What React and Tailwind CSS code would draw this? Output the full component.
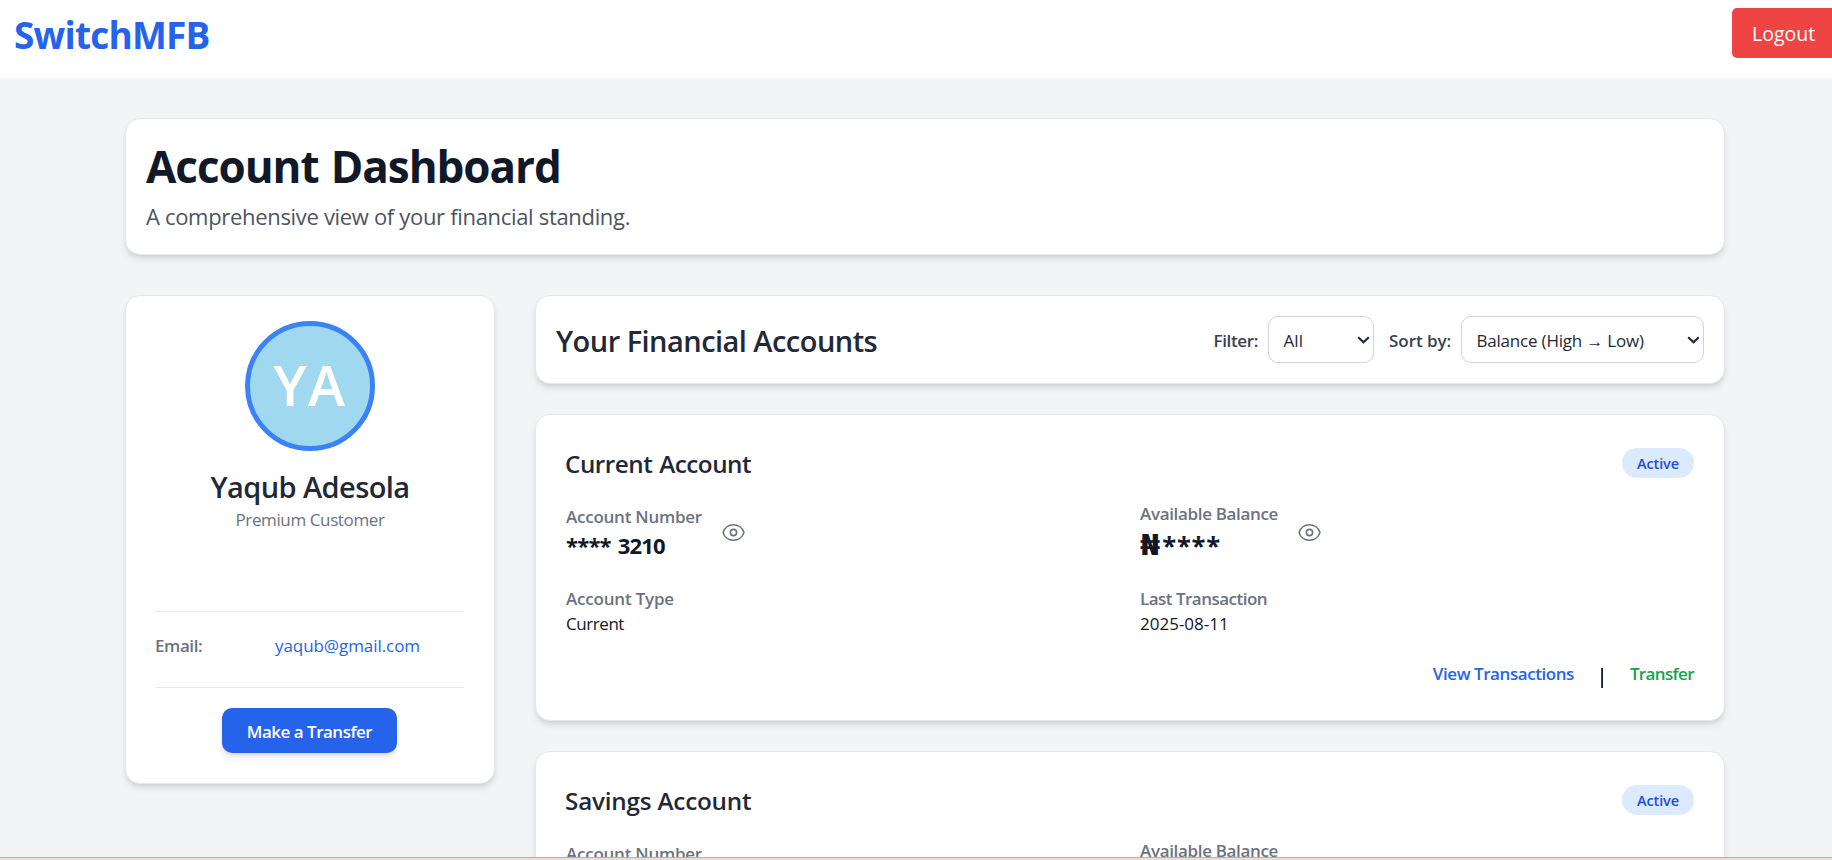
import React from "react";

const card =
  "rounded-[15px] border border-[#e5e7eb] bg-white shadow-[0_5px_7.5px_-1.25px_rgba(0,0,0,0.1),0_2.5px_5px_-2.5px_rgba(0,0,0,0.1)]";

const accounts = [
  {
    title: "Current Account",
    titleClass: "tracking-[-0.48px] [word-spacing:1px]",
    number: "**** 3210",
    type: "Current",
    last: "2025-08-11",
  },
  {
    title: "Savings Account",
    titleClass: "tracking-[-0.2px]",
    number: "**** 6543",
    type: "Savings",
    last: "2025-08-10",
  },
];

function Eye() {
  return (
    <button type="button" className="text-[#6b7280]">
      <svg
        className="block h-[25px] w-[25px]"
        viewBox="0 0 24 24"
        fill="none"
        stroke="currentColor"
        strokeWidth="1.5"
        strokeLinecap="round"
        strokeLinejoin="round"
      >
        <path d="M2.036 12.322a1.012 1.012 0 0 1 0-.639C3.423 7.51 7.36 4.5 12 4.5c4.638 0 8.573 3.007 9.963 7.178.07.207.07.431 0 .639C20.577 16.49 16.64 19.5 12 19.5c-4.638 0-8.573-3.007-9.963-7.178Z" />
        <path d="M15 12a3 3 0 1 1-6 0 3 3 0 0 1 6 0Z" />
      </svg>
    </button>
  );
}

function SelectBox({ label, className }) {
  return (
    <div
      className={`flex h-[47px] items-center justify-between rounded-[10px] border border-[#d1d5db] bg-white pt-[3px] pr-[3px] pl-[14.5px] text-[17px] text-[#1f2937] ${className}`}
    >
      <span className="whitespace-nowrap">{label}</span>
      <svg className="mb-0.5 h-2 w-[13px]" viewBox="0 0 13 8" fill="none" stroke="currentColor" strokeWidth="2.2">
        <path d="M1.2 1.2 6.5 6.2l5.3-5" />
      </svg>
    </div>
  );
}

function AccountCard({ account }) {
  return (
    <section className={`flex h-[307px] shrink-0 flex-col px-[30px] pt-[30px] ${card}`}>
      <div className="flex h-9 items-center justify-between">
        <h3 className={`-ml-px pt-0.5 text-[24.25px] font-semibold text-[#1f2937] ${account.titleClass}`}>
          {account.title}
        </h3>
        <span className="flex h-[30px] w-[72px] items-center justify-center rounded-full bg-[#dbeafe] pt-px text-[14.5px] font-semibold tracking-[-0.1px] text-[#1d4ed8]">
          Active
        </span>
      </div>
      <div className="mt-5 grid grid-cols-2 gap-x-5 gap-y-[22px] text-[17px] leading-[25px]">
        <div className="flex h-[63px] items-center gap-[19px]">
          <div>
            <p className="font-semibold tracking-[-0.24px] text-[#6b7280]">Account Number</p>
            <p className="text-[22px] leading-8 font-bold tracking-[-0.8px] text-[#111827] [word-spacing:2px]">
              {account.number}
            </p>
          </div>
          <Eye />
        </div>
        <div className="flex h-[63px] items-center gap-[19px]">
          <div>
            <p className="font-semibold tracking-[-0.34px] text-[#6b7280]">Available Balance</p>
            <p className="flex h-[38px] items-baseline leading-[38px] font-bold text-[#111827]">
              <span className="mr-0.5 font-['DejaVu_Sans',sans-serif] text-[29px]">₦</span>
              <span className="text-[25.5px] tracking-[0.8px]">****</span>
            </p>
          </div>
          <Eye />
        </div>
        <div>
          <p className="font-semibold tracking-[-0.2px] text-[#6b7280]">Account Type</p>
          <p className="tracking-[-0.44px] text-[#111827]">{account.type}</p>
        </div>
        <div>
          <p className="font-semibold tracking-[-0.52px] text-[#6b7280]">Last Transaction</p>
          <p className="text-[#111827]">{account.last}</p>
        </div>
      </div>
      <div className="mt-[25px] flex justify-end text-[17px] leading-[25px] font-semibold">
        <a className="tracking-[-0.44px] text-[#2563eb]">View Transactions</a>
        <span className="mt-[7px] mr-[27px] ml-[27px] flex h-5 w-0.5">
          <span className="w-px bg-[#7a3b2e]" />
          <span className="w-px bg-[#111827]" />
        </span>
        <a className="tracking-[-0.63px] text-[#16a34a]">Transfer</a>
      </div>
    </section>
  );
}

export default function App() {
  return (
    <div className="flex h-[860px] w-[1832px] flex-col overflow-hidden bg-[#f3f4f6] font-['Open_Sans','Noto_Sans',sans-serif]">
      <header className="flex h-[78px] shrink-0 items-start justify-between bg-white">
        <h1 className="mt-3 ml-[14px] text-[37px] leading-[45px] font-bold tracking-[-0.8px] text-[#2563eb]">
          SwitchMFB
        </h1>
        <button
          type="button"
          className="mt-2 flex h-[50px] w-[100px] items-center rounded-l-[5px] bg-[#ef4444] pt-px pl-5 text-[19.5px] text-white"
        >
          Logout
        </button>
      </header>

      <main className="flex min-h-0 flex-1 flex-col overflow-hidden pt-10 pr-[107px] pl-[125px]">
        <section className={`h-[137px] shrink-0 px-5 pt-[22px] ${card}`}>
          <h2 className="text-[44px] leading-[50px] font-bold tracking-[-1.05px] text-[#111827] [word-spacing:2px]">
            Account Dashboard
          </h2>
          <p className="mt-2 text-[22px] leading-[35px] tracking-[-0.32px] text-[#4b5563]">
            A comprehensive view of your financial standing.
          </p>
        </section>

        <div className="mt-10 flex items-start gap-10">
          <aside className={`flex h-[489px] w-[370px] shrink-0 flex-col items-center px-[30px] pt-[25px] ${card}`}>
            <div className="flex h-[130px] w-[130px] shrink-0 items-center justify-center rounded-full border-5 border-[#3b82f6] bg-[#a0d8ef] pb-[5px] text-[56px] leading-none font-semibold tracking-[1.5px] text-white">
              YA
            </div>
            <h3 className="mt-4 text-[29px] leading-10 font-semibold tracking-[-0.58px] text-[#1f2937]">
              Yaqub Adesola
            </h3>
            <p className="text-[17px] leading-[25px] tracking-[-0.38px] text-[#6b7280]">Premium Customer</p>
            <div className="mt-[79px] flex h-[76px] w-full border-t border-[#e5e7eb] pt-[21px] text-[17px] leading-[25px]">
              <span className="-ml-px w-[120px] font-semibold tracking-[-0.4px] text-[#6b7280]">Email:</span>
              <a className="tracking-[-0.07px] text-[#2563eb]">yaqub@gmail.com</a>
            </div>
            <div className="flex w-full justify-center border-t border-[#e5e7eb] pt-5 pr-px">
              <button
                type="button"
                className="h-[45px] w-[175px] rounded-[10px] bg-[#2563eb] pt-0.5 text-[17px] font-semibold tracking-[-0.5px] text-white shadow-[0_5px_7.5px_-1.25px_rgba(0,0,0,0.1),0_2.5px_5px_-2.5px_rgba(0,0,0,0.1)]"
              >
                Make a Transfer
              </button>
            </div>
          </aside>

          <div className="flex min-w-0 flex-1 flex-col gap-[30px]">
            <section className={`flex h-[89px] shrink-0 items-center justify-between px-5 ${card}`}>
              <h3 className="pt-0.5 text-[29px] font-semibold tracking-[-0.54px] text-[#1f2937]">
                Your Financial Accounts
              </h3>
              <div className="mb-px flex items-center text-[17px] font-semibold text-[#374151]">
                <span className="mr-[10px] pt-[3px] tracking-[-0.35px]">Filter:</span>
                <SelectBox label="All" className="mr-[15px] w-[106px] font-normal" />
                <span className="mr-[10px] pt-[3px] tracking-[-0.08px]">Sort by:</span>
                <SelectBox label="Balance (High → Low)" className="w-[243px] font-normal tracking-[-0.2px]" />
              </div>
            </section>
            {accounts.map((a) => (
              <AccountCard key={a.title} account={a} />
            ))}
          </div>
        </div>
      </main>

      <footer className="h-[3px] shrink-0 border-t border-[#b9b0ad] bg-[#ecdcd4]" />
    </div>
  );
}
